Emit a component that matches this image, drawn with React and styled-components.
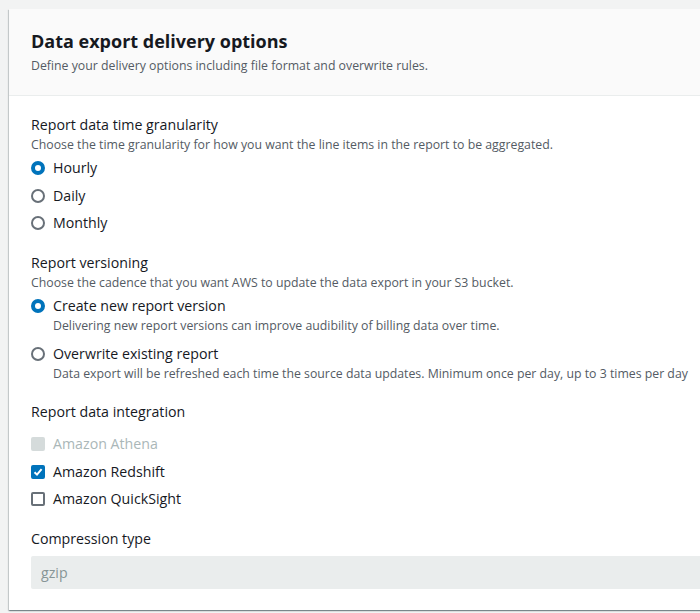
import React from "react";
import styled, { createGlobalStyle } from "styled-components";

const Global = createGlobalStyle`
  html, body { margin: 0; padding: 0; background: #f2f3f3; }
  body { font-family: "Open Sans", "Noto Sans", sans-serif; color: #16191f; }
  * { box-sizing: border-box; }
`;

const Page = styled.div`
  padding: 9px 0 0 9px;
  height: 613px;
  overflow: hidden;
`;

const Card = styled.section`
  background: #fff;
  width: 720px;
  box-shadow: 0 1px 1px 0 rgba(0, 28, 36, 0.3), 1px 1px 1px 0 rgba(0, 28, 36, 0.15), -1px 1px 1px 0 rgba(0, 28, 36, 0.15);
`;

const Header = styled.header`
  background: #fafafa;
  border-bottom: 1px solid #eaeded;
  padding: 19px 20px 21px 22px;
`;

const Title = styled.h2`
  margin: 0;
  font-size: 18px;
  font-weight: 700;
  line-height: 26px;
  color: #16191f;
`;

const Subtitle = styled.p`
  margin: 4px 0 0;
  font-size: 12.3px;
  line-height: 16px;
  color: #545b64;
`;

const Body = styled.div`
  padding: 18px 20px 21px 22px;
  display: flex;
  flex-direction: column;
  gap: 18px;
`;

const Field = styled.div`
  display: flex;
  flex-direction: column;
`;

const Label = styled.div`
  font-size: 14.2px;
  line-height: 22px;
  color: #16191f;
`;

const Description = styled.div`
  font-size: 12.3px;
  line-height: 18px;
  color: #545b64;
  margin-bottom: 3px;
`;

const Options = styled.div`
  display: flex;
  flex-direction: column;
  gap: ${(p) => p.$gap || 5}px;
  margin-top: ${(p) => p.$top || 0}px;
`;

const Option = styled.label`
  display: grid;
  grid-template-columns: 14px 1fr;
  column-gap: 8px;
  align-items: start;
`;

const Radio = styled.span`
  width: 14px;
  height: 14px;
  margin-top: 4px;
  border-radius: 50%;
  border: ${(p) => (p.$checked ? "4px solid #0073bb" : "2px solid #687078")};
  background: #fff;
`;

const Box = styled.span`
  width: 14px;
  height: 14px;
  margin-top: 4px;
  border-radius: 2px;
  display: flex;
  align-items: center;
  justify-content: center;
  ${(p) =>
    p.$disabled
      ? "background: #d5dbdb; border: 2px solid #d5dbdb;"
      : p.$checked
      ? "background: #0073bb; border: 2px solid #0073bb;"
      : "background: #fff; border: 2px solid #687078;"}
`;

const OptionText = styled.div`
  display: flex;
  flex-direction: column;
`;

const OptionLabel = styled.span`
  font-size: 14.2px;
  line-height: 22px;
  color: ${(p) => (p.$disabled ? "#aab7b8" : "#16191f")};
`;

const OptionHint = styled.span`
  font-size: 12.3px;
  line-height: 18px;
  color: #545b64;
`;

const Select = styled.div`
  margin-top: 6px;
  height: 33px;
  background: #eaeded;
  border-radius: 2px;
  padding: 0 10px;
  display: flex;
  align-items: center;
  font-size: 14.2px;
  color: #879596;
`;

function RadioOption({ checked, label, hint }) {
  return (
    <Option>
      <Radio $checked={checked} />
      <OptionText>
        <OptionLabel>{label}</OptionLabel>
        {hint && <OptionHint>{hint}</OptionHint>}
      </OptionText>
    </Option>
  );
}

function CheckOption({ checked, disabled, label }) {
  return (
    <Option>
      <Box $checked={checked} $disabled={disabled}>
        {checked && (
          <svg width="10" height="10" viewBox="0 0 10 10">
            <path d="M1.5 5.2 L4 7.6 L8.6 2.2" fill="none" stroke="#fff" strokeWidth="2" />
          </svg>
        )}
      </Box>
      <OptionText>
        <OptionLabel $disabled={disabled}>{label}</OptionLabel>
      </OptionText>
    </Option>
  );
}

export default function App() {
  return (
    <>
      <Global />
      <Page>
        <Card>
          <Header>
            <Title>Data export delivery options</Title>
            <Subtitle>Define your delivery options including file format and overwrite rules.</Subtitle>
          </Header>
          <Body>
            <Field>
              <Label>Report data time granularity</Label>
              <Description>Choose the time granularity for how you want the line items in the report to be aggregated.</Description>
              <Options $gap={5.5}>
                <RadioOption checked label="Hourly" />
                <RadioOption label="Daily" />
                <RadioOption label="Monthly" />
              </Options>
            </Field>
            <Field>
              <Label>Report versioning</Label>
              <Description>Choose the cadence that you want AWS to update the data export in your S3 bucket.</Description>
              <Options $gap={8}>
                <RadioOption
                  checked
                  label="Create new report version"
                  hint="Delivering new report versions can improve audibility of billing data over time."
                />
                <RadioOption
                  label="Overwrite existing report"
                  hint="Data export will be refreshed each time the source data updates. Minimum once per day, up to 3 times per day"
                />
              </Options>
            </Field>
            <Field>
              <Label>Report data integration</Label>
              <Options $gap={5.5} $top={10}>
                <CheckOption disabled label="Amazon Athena" />
                <CheckOption checked label="Amazon Redshift" />
                <CheckOption label="Amazon QuickSight" />
              </Options>
            </Field>
            <Field>
              <Label>Compression type</Label>
              <Select>gzip</Select>
            </Field>
          </Body>
        </Card>
      </Page>
    </>
  );
}
